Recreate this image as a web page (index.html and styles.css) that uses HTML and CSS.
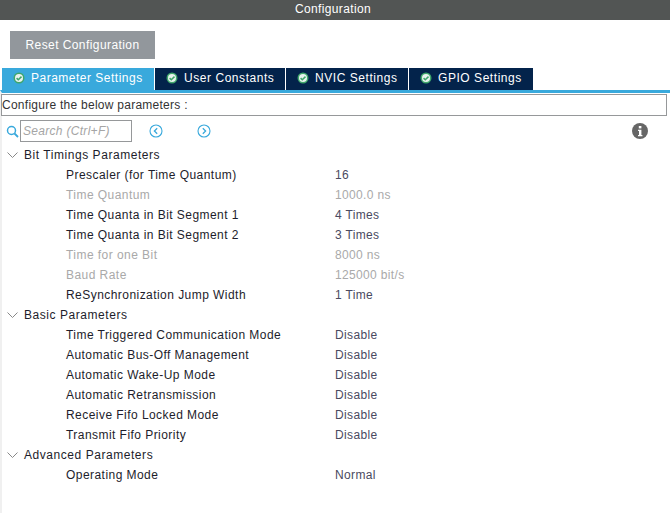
FILE: index.html
```html
<!DOCTYPE html>
<html lang="en">
<head>
<meta charset="utf-8">
<title>Configuration</title>
<link rel="stylesheet" href="styles.css">
</head>
<body>
<svg class="defs" width="0" height="0" aria-hidden="true">
  <symbol id="ok" viewBox="0 0 12 12">
    <circle cx="6" cy="6" r="5.5" fill="#3fa66b"/>
    <circle cx="6" cy="6" r="4" fill="#e8f3ee"/>
    <path d="M3.6 6.1 5.3 7.8 8.5 4.6" fill="none" stroke="#3fa66b" stroke-width="1.5"/>
  </symbol>
</svg>
<header class="title">Configuration</header>
<div class="toolbar"><button class="reset">Reset Configuration</button></div>
<nav class="tabs">
  <div class="tab active"><svg class="ok"><use href="#ok"/></svg>Parameter Settings</div>
  <div class="tab t2"><svg class="ok"><use href="#ok"/></svg>User Constants</div>
  <div class="tab t3"><svg class="ok"><use href="#ok"/></svg>NVIC Settings</div>
  <div class="tab t4"><svg class="ok"><use href="#ok"/></svg>GPIO Settings</div>
</nav>
<main class="panel">
  <div class="hint">Configure the below parameters :</div>
  <div class="searchbar">
    <svg class="mag" viewBox="0 0 13 13"><circle cx="5.500" cy="5.500" r="4" fill="none" stroke="#39a9dc" stroke-width="1.5"/><path d="M8.500 8.500 12 12" stroke="#39a9dc" stroke-width="1.8"/></svg>
    <div class="search">Search (Ctrl+F)</div>
    <svg class="nav first" viewBox="0 0 14 14"><circle cx="7" cy="7" r="6" fill="none" stroke="#39a9dc" stroke-width="1.1"/><path d="M8.200 4.200 5.400 7l2.800 2.800" fill="none" stroke="#39a9dc" stroke-width="1.3"/></svg>
    <svg class="nav second" viewBox="0 0 14 14"><circle cx="7" cy="7" r="6" fill="none" stroke="#39a9dc" stroke-width="1.1"/><path d="M5.800 4.200 8.600 7l-2.800 2.800" fill="none" stroke="#39a9dc" stroke-width="1.3"/></svg>
    <svg class="info" viewBox="0 0 16 16"><circle cx="8" cy="8" r="8" fill="#666"/><rect x="6.800" y="3" width="2.600" height="2.400" fill="#fff"/><path d="M6 6.700h3.400v5.200h1v1.300H6v-1.300h1V8H6z" fill="#fff"/></svg>
  </div>
  <div class="tree">
    <div class="group"><svg class="chev" viewBox="0 0 11 6"><path d="M.5.5 5.500 5.500 10.500.5" fill="none" stroke="#888" stroke-width="1"/></svg>Bit Timings Parameters</div>
    <div class="row"><span class="name">Prescaler (for Time Quantum)</span><span class="val">16</span></div>
    <div class="row off"><span class="name">Time Quantum</span><span class="val">1000.0 ns</span></div>
    <div class="row"><span class="name">Time Quanta in Bit Segment 1</span><span class="val">4 Times</span></div>
    <div class="row"><span class="name">Time Quanta in Bit Segment 2</span><span class="val">3 Times</span></div>
    <div class="row off"><span class="name">Time for one Bit</span><span class="val">8000 ns</span></div>
    <div class="row off"><span class="name">Baud Rate</span><span class="val">125000 bit/s</span></div>
    <div class="row"><span class="name">ReSynchronization Jump Width</span><span class="val">1 Time</span></div>
    <div class="group"><svg class="chev" viewBox="0 0 11 6"><path d="M.5.5 5.500 5.500 10.500.5" fill="none" stroke="#888" stroke-width="1"/></svg>Basic Parameters</div>
    <div class="row"><span class="name">Time Triggered Communication Mode</span><span class="val">Disable</span></div>
    <div class="row"><span class="name">Automatic Bus-Off Management</span><span class="val">Disable</span></div>
    <div class="row"><span class="name">Automatic Wake-Up Mode</span><span class="val">Disable</span></div>
    <div class="row"><span class="name">Automatic Retransmission</span><span class="val">Disable</span></div>
    <div class="row"><span class="name">Receive Fifo Locked Mode</span><span class="val">Disable</span></div>
    <div class="row"><span class="name">Transmit Fifo Priority</span><span class="val">Disable</span></div>
    <div class="group"><svg class="chev" viewBox="0 0 11 6"><path d="M.5.5 5.500 5.500 10.500.5" fill="none" stroke="#888" stroke-width="1"/></svg>Advanced Parameters</div>
    <div class="row"><span class="name">Operating Mode</span><span class="val">Normal</span></div>
  </div>
</main>
</body>
</html>
```
FILE: styles.css
```css
* { box-sizing: border-box; }
html, body { margin: 0; height: 100%; overflow: hidden; }
body { width: 670px; height: 513px; background: #fff; font-family: "Liberation Sans", Arial, sans-serif; font-size: 12px; color: #1d1d2b; display: flex; flex-direction: column; }
.defs { position: absolute; }
.title { height: 20px; flex: none; background: #525554; color: #fff; text-align: center; line-height: 19px; letter-spacing: .35px; padding-right: 4px; }
.toolbar { height: 48px; flex: none; padding: 11px 0 0 10px; }
.reset { display: block; width: 145px; height: 28px; padding: 0; border: 0; background: #92979c; color: #fff; font: 12px "Liberation Sans", Arial, sans-serif; letter-spacing: .42px; }
.tabs { height: 22px; flex: none; display: flex; padding-left: 2px; }
.tab { height: 22px; background: #03234b; color: #fff; letter-spacing: .55px; line-height: 20px; display: flex; align-items: flex-start; margin-right: 1px; padding-left: 11px; }
.tab.active { width: 152px; background: #39a9dc; padding-left: 11px; letter-spacing: .5px; }
.t2 { width: 130px; }
.t3 { width: 122px; }
.t4 { width: 124px; margin-right: 0; }
.ok { width: 12px; height: 12px; margin: 4px 6px 0 0; flex: none; }
.panel { flex: 1; border-top: 3px solid #39a9dc; border-left: 2px solid #f0f0f0; min-height: 0; }
.hint { height: 22px; margin: 1px 3px 0 -1px; border: 1px solid #96989a; line-height: 20px; color: #333; letter-spacing: .26px; padding-left: 0; }
.searchbar { height: 25px; display: flex; align-items: center; position: relative; padding-top: 5px; }
.mag { width: 13px; height: 13px; margin: 0 1px 0 4px; flex: none; }
.search { width: 112px; height: 22px; border: 1px solid #96989a; color: #a5a5a5; font-style: italic; line-height: 20px; padding-left: 2px; letter-spacing: .3px; flex: none; }
.nav { width: 14px; height: 14px; flex: none; }
.first { margin-left: 17px; }
.second { margin-left: 34px; }
.info { width: 16px; height: 16px; margin-left: auto; margin-right: 22px; flex: none; }
.tree { padding-top: 4px; }
.group, .row { height: 20px; line-height: 20px; display: flex; align-items: center; white-space: nowrap; letter-spacing: .45px; }
.group { padding-left: 5px; letter-spacing: .55px; }
.chev { width: 11px; height: 6px; margin-right: 6px; flex: none; }
.row { padding-left: 64px; }
.name { width: 269px; flex: none; }
.val { color: #4a4a60; letter-spacing: .35px; }
.off .name, .off .val { color: #a9a9a9; }
```
